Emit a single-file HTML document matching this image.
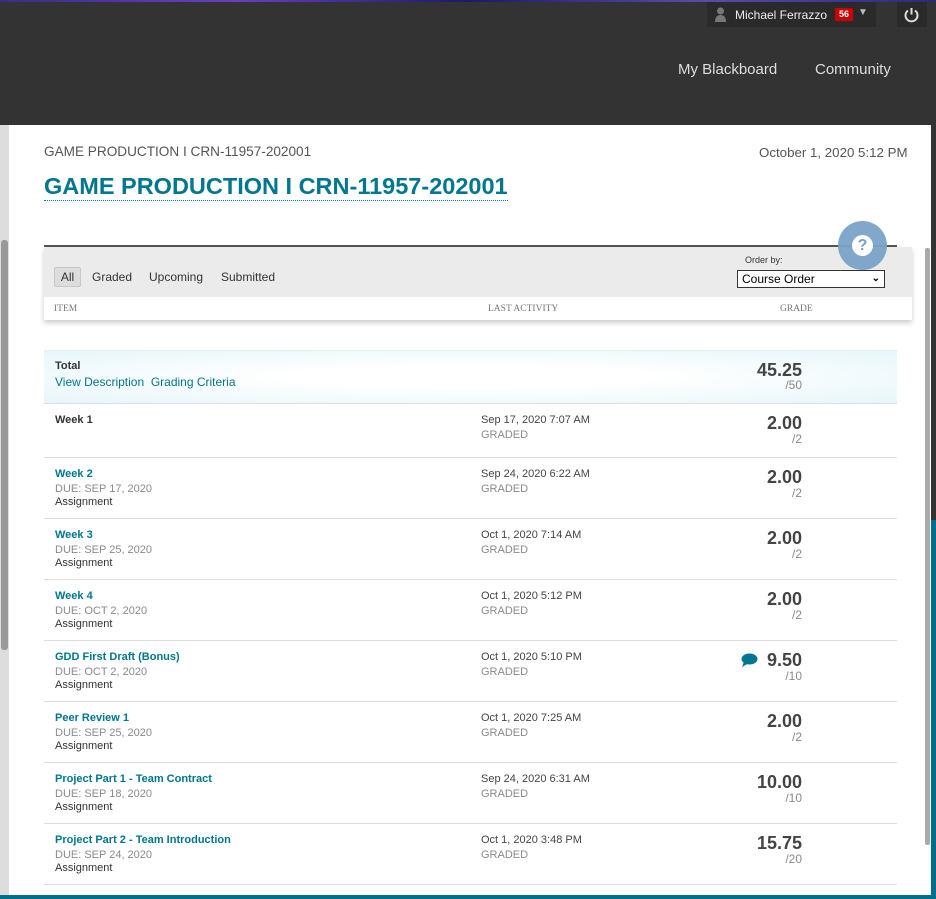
<!DOCTYPE html>
<html><head><meta charset="utf-8"><style>
*{margin:0;padding:0;box-sizing:border-box}
body{width:936px;height:899px;overflow:hidden;background:#333;font-family:"Liberation Sans",Arial,sans-serif;position:relative}
.a{position:absolute;white-space:nowrap}
.teal{color:#00768f}
.row{position:absolute;left:44px;width:853px;border-bottom:1px solid #ddd}
.t{position:absolute;left:11px;font-size:11px;font-weight:bold}
.s{position:absolute;left:11px;font-size:11px;color:#8a8a8a}
.s2{position:absolute;left:11px;font-size:11px;color:#333}
.d{position:absolute;left:437px;font-size:11px;color:#444}
.g{position:absolute;left:437px;font-size:11px;color:#8a8a8a}
.n{position:absolute;right:95px;font-size:18px;font-weight:bold;color:#444}
.o{position:absolute;right:95px;font-size:12px;color:#8a8a8a}
</style></head><body>
<div class="a" style="left:0;top:0;width:936px;height:2px;background:linear-gradient(90deg,#3a2b8a,#6a3fc0,#1a1a6a,#5a4ab0,#2a2a7a)"></div>
<div class="a" style="left:707px;top:2px;width:169px;height:25px;background:#2a2a2a"></div>
<svg class="a" style="left:714px;top:7px" width="13" height="15"><circle cx="6.5" cy="4" r="3.5" fill="#777"/><path d="M1 15 Q1 8 6.5 8 Q12 8 12 15Z" fill="#777"/></svg>
<div class="a" style="left:735px;top:8px;font-size:12px;color:#eee">Michael Ferrazzo</div>
<div class="a" style="left:835px;top:8px;width:18px;height:13px;background:#c00;color:#fff;font-size:9px;font-weight:bold;text-align:center;line-height:13px">56</div>
<div class="a" style="left:858px;top:7px;font-size:10px;color:#bbb">▼</div>
<div class="a" style="left:897px;top:2px;width:30px;height:25px;background:#2a2a2a"></div>
<svg class="a" style="left:903px;top:6px" width="17" height="17"><path d="M5 4.5 A6 6 0 1 0 12 4.5" stroke="#ddd" stroke-width="2" fill="none"/><line x1="8.5" y1="2" x2="8.5" y2="8.5" stroke="#ddd" stroke-width="2"/></svg>
<div class="a" style="left:678px;top:61px;font-size:15px;color:#ddd">My Blackboard</div>
<div class="a" style="left:815px;top:61px;font-size:15px;color:#ddd">Community</div>
<div class="a" style="left:931px;top:520px;width:5px;height:379px;background:#00708a"></div>
<div class="a" style="left:0;top:125px;width:9px;height:774px;background:#ddd"></div>
<div class="a" style="left:1px;top:240px;width:7px;height:410px;background:#999;border-radius:3px"></div>
<div class="a" style="left:9px;top:125px;width:922px;height:770px;background:#fff"></div>
<div class="a" style="left:0;top:895px;width:936px;height:4px;background:#00708a"></div>
<div class="a" style="left:925px;top:248px;width:5px;height:597px;background:#aaa;border-radius:2px"></div>
<div class="a" style="left:44px;top:144px;font-size:13.6px;color:#555">GAME PRODUCTION I CRN-11957-202001</div>
<div class="a" style="left:759px;top:145px;font-size:13.3px;color:#555">October 1, 2020 5:12 PM</div>
<div class="a teal" style="left:44px;top:173px;font-size:23.5px;font-weight:bold;border-bottom:1px dotted #00768f;padding-bottom:0;line-height:27px">GAME PRODUCTION I CRN-11957-202001</div>
<div class="a" style="left:44px;top:245px;width:853px;height:2px;background:#555"></div>
<div class="a" style="left:44px;top:247px;width:868px;height:73px;background:#ebebeb;box-shadow:0 3px 5px rgba(0,0,0,.2)"></div>
<div class="a" style="left:44px;top:297px;width:868px;height:23px;background:#fff"></div>
<div class="a" style="left:54px;top:267px;width:27px;height:20px;background:#ddd;border:1px solid #c8c8c8;border-radius:2px;font-size:12px;color:#333;text-align:center;line-height:18px">All</div>
<div class="a" style="left:92px;top:270px;font-size:12px;color:#333">Graded</div>
<div class="a" style="left:149px;top:270px;font-size:12px;color:#333">Upcoming</div>
<div class="a" style="left:221px;top:270px;font-size:12px;color:#333">Submitted</div>
<div class="a" style="left:745px;top:255px;font-size:9px;color:#333">Order by:</div>
<div class="a" style="left:737px;top:270px;width:148px;height:18px;border:1px solid #333;background:#fff;font-size:12px;color:#000;padding-left:4px;line-height:16px">Course Order<span style="position:absolute;right:4px;font-size:10px;font-weight:bold">&#8964;</span></div>
<div class="a" style="left:54px;top:304px;font-size:9.5px;color:#777;font-family:'Liberation Serif',serif">ITEM</div>
<div class="a" style="left:488px;top:304px;font-size:9.5px;color:#777;font-family:'Liberation Serif',serif">LAST ACTIVITY</div>
<div class="a" style="left:780px;top:304px;font-size:9.5px;color:#777;font-family:'Liberation Serif',serif">GRADE</div>
<div class="a" style="left:838px;top:221px;width:49px;height:49px;border-radius:50%;background:#7aa3c7;opacity:.95"></div>
<div class="a" style="left:852px;top:235px;width:21px;height:21px;border-radius:50%;background:#fff;color:#7aa3c7;font-weight:bold;font-size:16px;text-align:center;line-height:21px">?</div>
<div class="row" style="top:350px;height:54px;background:radial-gradient(ellipse at center,#fff 30%,#e6f6fb 100%);border-top:1px solid #e0f2f7">
<div class="t" style="top:9px;color:#333">Total</div>
<div class="s teal" style="top:24px;font-size:12px;color:#00768f">View Description &nbsp;Grading Criteria</div>
<div class="n" style="top:9px">45.25</div><div class="o" style="top:27px">/50</div></div>
<div class="row" style="top:404px;height:54px"><div class="t" style="top:10px;color:#333">Week 1</div><div class="d" style="top:10px">Sep 17, 2020 7:07 AM</div><div class="g" style="top:25px">GRADED</div><div class="n" style="top:9px">2.00</div><div class="o" style="top:28px">/2</div></div>
<div class="row" style="top:458px;height:61px"><div class="t teal" style="top:10px">Week 2</div><div class="s" style="top:25px">DUE: SEP 17, 2020</div><div class="s2" style="top:38px">Assignment</div><div class="d" style="top:10px">Sep 24, 2020 6:22 AM</div><div class="g" style="top:25px">GRADED</div><div class="n" style="top:9px">2.00</div><div class="o" style="top:28px">/2</div></div>
<div class="row" style="top:519px;height:61px"><div class="t teal" style="top:10px">Week 3</div><div class="s" style="top:25px">DUE: SEP 25, 2020</div><div class="s2" style="top:38px">Assignment</div><div class="d" style="top:10px">Oct 1, 2020 7:14 AM</div><div class="g" style="top:25px">GRADED</div><div class="n" style="top:9px">2.00</div><div class="o" style="top:28px">/2</div></div>
<div class="row" style="top:580px;height:61px"><div class="t teal" style="top:10px">Week 4</div><div class="s" style="top:25px">DUE: OCT 2, 2020</div><div class="s2" style="top:38px">Assignment</div><div class="d" style="top:10px">Oct 1, 2020 5:12 PM</div><div class="g" style="top:25px">GRADED</div><div class="n" style="top:9px">2.00</div><div class="o" style="top:28px">/2</div></div>
<div class="row" style="top:641px;height:61px"><div class="t teal" style="top:10px">GDD First Draft (Bonus)</div><div class="s" style="top:25px">DUE: OCT 2, 2020</div><div class="s2" style="top:38px">Assignment</div><div class="d" style="top:10px">Oct 1, 2020 5:10 PM</div><div class="g" style="top:25px">GRADED</div>
<svg style="position:absolute;left:697px;top:12px" width="17" height="14"><ellipse cx="8.5" cy="6" rx="8" ry="5.5" fill="#00768f"/><path d="M3 9 L1 14 L8 10Z" fill="#00768f"/></svg>
<div class="n" style="top:9px">9.50</div><div class="o" style="top:28px">/10</div></div>
<div class="row" style="top:702px;height:61px"><div class="t teal" style="top:10px">Peer Review 1</div><div class="s" style="top:25px">DUE: SEP 25, 2020</div><div class="s2" style="top:38px">Assignment</div><div class="d" style="top:10px">Oct 1, 2020 7:25 AM</div><div class="g" style="top:25px">GRADED</div><div class="n" style="top:9px">2.00</div><div class="o" style="top:28px">/2</div></div>
<div class="row" style="top:763px;height:61px"><div class="t teal" style="top:10px">Project Part 1 - Team Contract</div><div class="s" style="top:25px">DUE: SEP 18, 2020</div><div class="s2" style="top:38px">Assignment</div><div class="d" style="top:10px">Sep 24, 2020 6:31 AM</div><div class="g" style="top:25px">GRADED</div><div class="n" style="top:9px">10.00</div><div class="o" style="top:28px">/10</div></div>
<div class="row" style="top:824px;height:61px"><div class="t teal" style="top:10px">Project Part 2 - Team Introduction</div><div class="s" style="top:25px">DUE: SEP 24, 2020</div><div class="s2" style="top:38px">Assignment</div><div class="d" style="top:10px">Oct 1, 2020 3:48 PM</div><div class="g" style="top:25px">GRADED</div><div class="n" style="top:9px">15.75</div><div class="o" style="top:28px">/20</div></div>
</body></html>
